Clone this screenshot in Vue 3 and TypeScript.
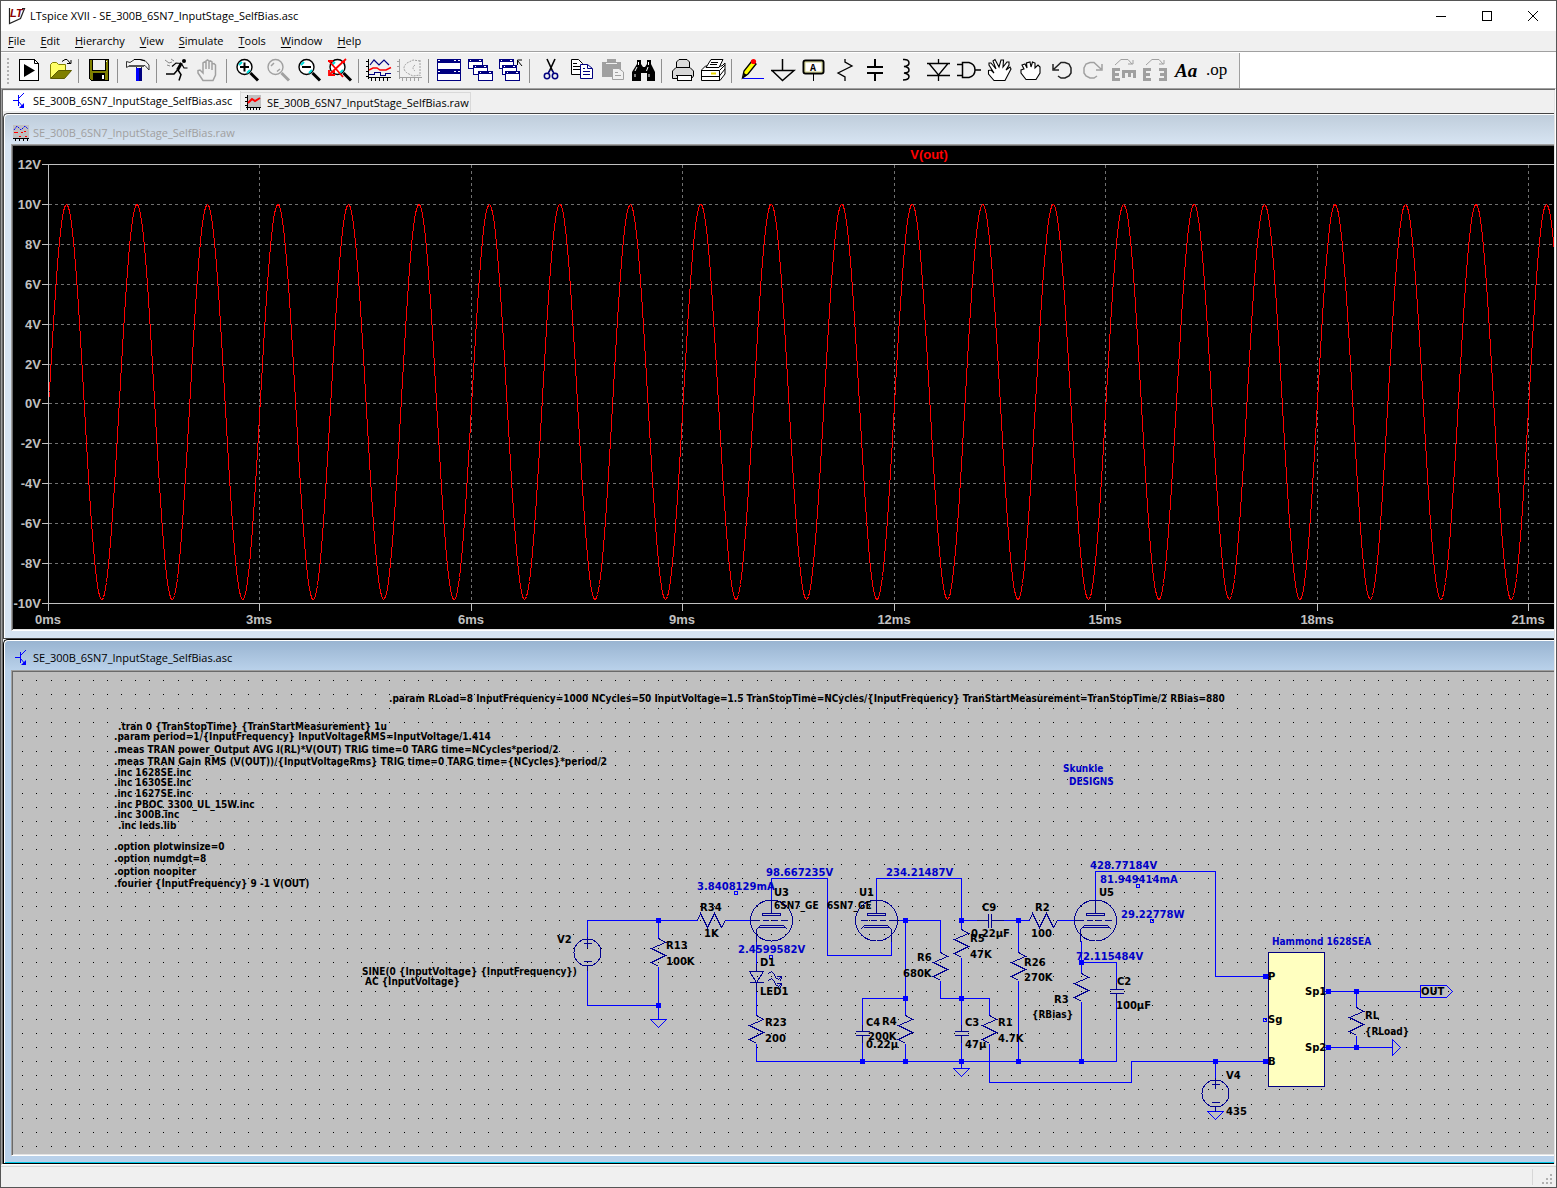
<script setup lang="ts">
type Kind = 'd' | 'b' | 'b d'
interface Label { t: string; x: number; y: number; c?: Kind }

const fileName = 'SE_300B_6SN7_InputStage_SelfBias'
const menus = ['File', 'Edit', 'Hierarchy', 'View', 'Simulate', 'Tools', 'Window', 'Help']

const groups: string[][] = [
  ['run', 'open'], ['save'], ['tool'], ['sprint', 'halt'],
  ['zoomin', 'zoompan', 'zoomout', 'zoomfit'], ['plot', 'smith'],
  ['tile', 'cascade', 'closeall'], ['cut', 'copy', 'paste', 'find'],
  ['print', 'setup'],
  ['wire', 'ground', 'label', 'resistor', 'capacitor', 'inductor', 'diode', 'gate',
    'move', 'drag', 'undo', 'redo', 'rotate', 'mirror', 'text', 'op'],
]

/* ---- waveform pane ---- */
const left = 48
const msPitch = 1480 / 7
const volts = [12, 10, 8, 6, 4, 2, 0, -2, -4, -6, -8, -10].map((v) => ({
  text: v + 'V', y: Math.round(403.4 - v * 19.95),
}))
const times = [0, 3, 6, 9, 12, 15, 18, 21].map((t, i) => ({
  text: t + 'ms', x: Math.round(left + i * msPitch),
}))
const wave = (() => {
  const period = msPitch / 3
  let d = 'M48 403'
  for (let x = 49; x < 2600; x++) {
    const y = 401.5 - 197.5 * Math.sin(((x - left - 0.4) / period) * 2 * Math.PI)
    d += 'L' + x + ' ' + Math.round(y)
  }
  return d
})()

/* ---- schematic pane ---- */
const dots = (() => {
  let d = ''
  for (let r = 0; r < 60; r++) {
    for (let c = 0; c < 180; c++) {
      d += 'M' + Math.floor(22.77 + 14.12 * c) + ' ' + Math.floor(680.45 + 14.12 * r) + 'h1v1h-1z'
    }
  }
  return d
})()

const wires = [
  'M587 936V920H697', 'M587 968V1005H658', 'M658 920V938', 'M658 966V1019',
  'M725 920H749', 'M771 899V878H827V955H891V940', 'M756 940V963', 'M756 991V1015',
  'M756 1043V1061H1116V992', 'M876 899V878H961V929', 'M898 920H940V952', 'M940 980V998H989V1015',
  'M905 920V1015', 'M905 998H862V1024', 'M862 1042V1061', 'M905 1043V1061',
  'M961 957V1024', 'M961 1042V1068', 'M989 1043V1082H1131V1061H1268', 'M961 920H976', 'M1003 920H1029',
  'M1018 920V952', 'M1018 980V1061', 'M1057 920H1074', 'M1095 899V871H1215V976H1272',
  'M1081 940V973', 'M1081 962H1116V982', 'M1081 1001V1061', 'M1215 1061V1077',
  'M1324 991H1420', 'M1324 1047H1392', 'M1356 991V1007', 'M1356 1035V1047',
  'M1420 985H1446L1452 991L1446 997H1420Z', 'M1392 1039L1400 1047L1392 1055Z',
  'M650 1019H666L658 1027Z', 'M953 1068H969L961 1076Z', 'M1207 1111H1223L1215 1119Z',
]
const nodes = [
  [658, 920], [658, 1005], [905, 920], [905, 998], [905, 1061], [862, 1061], [961, 920],
  [961, 998], [961, 1061], [1018, 920], [1018, 1061], [1081, 962], [1081, 1061], [1215, 1061],
  [1265, 976], [1265, 1061], [1328, 991], [1328, 1047], [1356, 991], [1356, 1047],
]
const probes = [[736, 892], [771, 956], [1138, 885], [1152, 920], [1265, 1019]]
const vertical = [[658, 938], [756, 1015], [940, 952], [905, 1015], [961, 929], [989, 1015], [1018, 952], [1081, 973], [1356, 1007]]
const horizontal = [[697, 920], [1029, 920]]
const sources = [[587, 952], [1215, 1093]]
const caps = [[862, 1033], [961, 1033], [1116, 991]]
const tubes = [
  { x: 771, flip: 1 }, { x: 876, flip: -1 }, { x: 1095, flip: 1 },
]
const zigV = 'l7 4l-14 6l14 7l-14 7l7 4'
const zigH = 'l3 -7l7 14l7 -14l7 14l4 -7'

const labels: Label[] = [
  { t: '.param RLoad=8 InputFrequency=1000 NCycles=50 InputVoltage=1.5 TranStopTime=NCycles/{InputFrequency} TranStartMeasurement=TranStopTime/2 RBias=880', x: 389, y: 702, c: 'd' },
  { t: '.tran 0 {TranStopTime} {TranStartMeasurement} 1u', x: 118, y: 730, c: 'd' },
  { t: '.param period=1/{InputFrequency} InputVoltageRMS=InputVoltage/1.414', x: 114, y: 740, c: 'd' },
  { t: '.meas TRAN power_Output AVG I(RL)*V(OUT) TRIG time=0 TARG time=NCycles*period/2', x: 114, y: 753, c: 'd' },
  { t: '.meas TRAN Gain RMS (V(OUT))/{InputVoltageRms} TRIG time=0 TARG time={NCycles}*period/2', x: 114, y: 765, c: 'd' },
  { t: '.inc 1628SE.inc', x: 114, y: 776, c: 'd' },
  { t: '.inc 1630SE.inc', x: 114, y: 786, c: 'd' },
  { t: '.inc 1627SE.inc', x: 114, y: 797, c: 'd' },
  { t: '.inc PBOC_3300_UL_15W.inc', x: 114, y: 808, c: 'd' },
  { t: '.inc 300B.inc', x: 114, y: 818, c: 'd' },
  { t: '.inc leds.lib', x: 118, y: 829, c: 'd' },
  { t: '.option plotwinsize=0', x: 114, y: 850, c: 'd' },
  { t: '.option numdgt=8', x: 114, y: 862, c: 'd' },
  { t: '.option noopiter', x: 114, y: 875, c: 'd' },
  { t: '.fourier {InputFrequency} 9 -1 V(OUT)', x: 114, y: 887, c: 'd' },
  { t: 'Skunkie', x: 1063, y: 772, c: 'b d' },
  { t: 'DESIGNS', x: 1069, y: 785, c: 'b d' },
  { t: 'V2', x: 557, y: 943 },
  { t: 'SINE(0 {InputVoltage} {InputFrequency})', x: 362, y: 975, c: 'd' },
  { t: 'AC {InputVoltage}', x: 365, y: 985, c: 'd' },
  { t: 'R13', x: 666, y: 949 }, { t: '100K', x: 666, y: 965 },
  { t: 'R34', x: 700, y: 911 }, { t: '1K', x: 704, y: 937 },
  { t: 'U3', x: 774, y: 896 }, { t: '6SN7_GE', x: 774, y: 909, c: 'd' },
  { t: '98.667235V', x: 766, y: 876, c: 'b' }, { t: '3.8408129mA', x: 697, y: 890, c: 'b' },
  { t: '2.4599582V', x: 738, y: 953, c: 'b' },
  { t: 'D1', x: 760, y: 966 }, { t: 'LED1', x: 760, y: 995 },
  { t: 'R23', x: 765, y: 1026 }, { t: '200', x: 765, y: 1042 },
  { t: 'U1', x: 859, y: 896 }, { t: '6SN7_GE', x: 827, y: 909, c: 'd' },
  { t: '234.21487V', x: 886, y: 876, c: 'b' },
  { t: 'C9', x: 982, y: 911 }, { t: '0.22µF', x: 971, y: 937 },
  { t: 'R5', x: 970, y: 942 }, { t: '47K', x: 970, y: 958 },
  { t: 'R6', x: 917, y: 961 }, { t: '680K', x: 903, y: 977 },
  { t: 'R26', x: 1024, y: 966 }, { t: '270K', x: 1024, y: 981 },
  { t: 'C4', x: 866, y: 1026 }, { t: '0.22µ', x: 866, y: 1048 },
  { t: 'R4', x: 882, y: 1025 }, { t: '200K', x: 868, y: 1040 },
  { t: 'C3', x: 965, y: 1026 }, { t: '47µ', x: 965, y: 1048 },
  { t: 'R1', x: 998, y: 1026 }, { t: '4.7K', x: 998, y: 1042 },
  { t: 'R2', x: 1035, y: 911 }, { t: '100', x: 1031, y: 937 },
  { t: 'U5', x: 1099, y: 896 },
  { t: '428.77184V', x: 1090, y: 869, c: 'b' }, { t: '81.949414mA', x: 1100, y: 883, c: 'b' },
  { t: '29.22778W', x: 1121, y: 918, c: 'b' }, { t: '72.115484V', x: 1076, y: 960, c: 'b' },
  { t: 'R3', x: 1054, y: 1003 }, { t: '{RBias}', x: 1032, y: 1018, c: 'd' },
  { t: 'C2', x: 1117, y: 985 }, { t: '100µF', x: 1116, y: 1009 },
  { t: 'V4', x: 1226, y: 1079 }, { t: '435', x: 1226, y: 1115 },
  { t: 'Hammond 1628SEA', x: 1272, y: 945, c: 'b d' },
  { t: 'P', x: 1268, y: 980 }, { t: 'Sg', x: 1268, y: 1023 }, { t: 'B', x: 1268, y: 1065 },
  { t: 'Sp1', x: 1305, y: 995 }, { t: 'Sp2', x: 1305, y: 1051 },
  { t: 'OUT', x: 1421, y: 995 },
  { t: 'RL', x: 1365, y: 1019 }, { t: '{RLoad}', x: 1365, y: 1035, c: 'd' },
]
</script>

<template>
  <div class="app">
    <header class="titlebar">
      <svg class="logo" width="18" height="18" viewBox="0 0 18 18">
        <path d="M1.500 1V16.500L12.500 11.500L16.500 1.500H14" fill="none" stroke="#222" stroke-width="1.200" />
        <text x="2" y="10" class="logo-text">LT</text>
      </svg>
      <h1>LTspice XVII - {{ fileName }}.asc</h1>
      <div class="controls">
        <button aria-label="Minimize"><svg width="12" height="12"><path d="M1 6.500H11" /></svg></button>
        <button aria-label="Maximize"><svg width="12" height="12"><path d="M1.500 1.500H10.500V10.500H1.500Z" /></svg></button>
        <button aria-label="Close"><svg width="12" height="12" class="smooth"><path d="M1 1L11 11M11 1L1 11" /></svg></button>
      </div>
    </header>

    <nav class="menubar">
      <button v-for="m in menus" :key="m"><u>{{ m[0] }}</u>{{ m.slice(1) }}</button>
    </nav>

    <div class="toolrow">
      <div class="toolbar">
        <div v-for="(g, gi) in groups" :key="gi" class="group">
          <button v-for="icon in g" :key="icon" :aria-label="icon">
            <svg width="26" height="26" viewBox="0 0 26 26">
              <template v-if="icon === 'run'">
                <path class="px" d="M3.500 1.500H18.500L22.500 5.500V22.500H3.500Z" fill="#fff" stroke="#000" />
                <path d="M18.500 1.500V5.500H22.500" fill="none" stroke="#000" />
                <path d="M8 6V19L19 12.500Z" fill="#000" />
              </template>
              <template v-else-if="icon === 'open'">
                <path d="M3.500 20V6.500L5.500 4.500H9.500L11.500 6.500H18.500V12" fill="#ffff66" stroke="#808000" />
                <path d="M3.500 20.500L11.500 12.500H24.500L17.500 20.500Z" fill="#808000" stroke="#5c5c00" />
                <path d="M15 3.500L18 1.500H20L23.500 5.500M20 5.500H24V2" fill="none" stroke="#000" />
              </template>
              <template v-else-if="icon === 'save'">
                <g class="px">
                  <path d="M3 1H23V23H5L3 21Z" fill="#000" />
                  <path d="M4 2H6V13H20V2H22V22H5L4 21Z" fill="#808000" />
                  <path d="M7 2H19V12H7Z" fill="#f0f0f0" /><path d="M7 15H19V22H7Z" fill="#000" />
                  <path d="M16 17H18V21H16Z" fill="#fff" /><path d="M20 3H21V4H20Z" fill="#f0f0f0" />
                </g>
              </template>
              <template v-else-if="icon === 'tool'">
                <path d="M1.500 3.500V9.500L5 7.500H11.500V10.500H16.500V7.500H20L24 12V7L20 2.500L15 1.500H9.500L5 4.500Z" fill="#f4f4f4" stroke="#333" />
                <path d="M9 1.500H15L20 3" fill="none" stroke="#000" />
                <path d="M4 8H19" stroke="#555" stroke-width="2" />
                <path d="M11 10H17V23H11Z" fill="#0000ff" /><path d="M15.500 10V23" stroke="#000080" stroke-width="3" />
              </template>
              <template v-else-if="icon === 'sprint'">
                <circle cx="20" cy="3" r="2" />
                <path d="M14 12L17 16.500L15 22.500M13.500 12L10 16H2" fill="none" stroke="#000" stroke-width="1.500" />
                <path d="M17 5.500L12 5L8 8.500M18 6.500L20 10H23.500" fill="none" stroke="#000" stroke-width="1.200" />
                <path d="M17.500 5L13.500 12" stroke="#000" stroke-width="3" />
                <path d="M1 2L5 5L8 4M3 7L6 8M7 1L10 3" fill="none" stroke="#888" />
              </template>
              <template v-else-if="icon === 'halt'">
                <path d="M8 22.500L3 15V12.500L5 12L8 15V5L9.500 4L11 5V11V3L12.500 2L14 3V11V4L15.500 3L17 4V12V6L19 5.500L20.500 7V17L18 22.500Z" fill="#f0f0f0" stroke="#a0a0a0" stroke-width="1.500" />
              </template>
              <template v-else-if="icon.startsWith('zoom')">
                <path d="M16.500 15L24 22.500" :stroke="icon === 'zoompan' ? '#a0a0a0' : '#000'" stroke-width="3" />
                <circle cx="10.500" cy="9" r="7.500" :fill="icon === 'zoompan' ? '#f0f0f0' : '#fff'" :stroke="icon === 'zoompan' ? '#a0a0a0' : '#000'" stroke-width="1.400" />
                <path v-if="icon !== 'zoompan'" d="M5 7L8 4M13 15L16 12" stroke="#00dede" stroke-width="2" />
                <path v-if="icon === 'zoompan'" d="M6 8L9 5M12 13.500L15 11" stroke="#a0a0a0" stroke-width="1.500" />
                <path v-if="icon === 'zoomin'" d="M6 9H15M10.500 4.500V13.500" stroke="#000" stroke-width="2" />
                <path v-if="icon === 'zoomout'" d="M6 9H15" stroke="#000" stroke-width="2" />
                <path v-if="icon === 'zoomfit'" d="M2 3L16 19M19 1L3 16" stroke="#f00" stroke-width="1.800" />
                <path v-if="icon === 'zoomfit'" d="M1 3H6M2 12V17H8M4 14H8M14 4H18" fill="none" stroke="#f00" stroke-width="1.800" />
              </template>
              <template v-else-if="icon === 'plot'">
                <path class="px" d="M2.500 1V21M2 19.500H25M0 3.500H2M0 8.500H2M0 13.500H2M0 18.500H2M5.500 20V23M9.500 20V23M13.500 20V23M17.500 20V23M21.500 20V23" stroke="#000" />
                <path d="M4 7L8 2L13 7L18 2L23 7" fill="none" stroke="#000080" stroke-width="1.200" />
                <path d="M3 12L7 10H11L14 12H20L25 9.500" fill="none" stroke="#f00" stroke-width="1.400" />
                <path class="px" d="M3 16.500H8.500V14.500H14.500V17.500H19.500V15.500H25" fill="none" stroke="#000080" />
              </template>
              <template v-else-if="icon === 'smith'">
                <path class="px" d="M2.500 1V21M2 19.500H25M0 3.500H2M0 8.500H2M0 13.500H2M5.500 20V23M9.500 20V23M13.500 20V23M17.500 20V23M21.500 20V23" stroke="#a0a0a0" />
                <path d="M23 3L16 2L10 5Q4 10 10 15L16 18L23 17M18 7Q14 10 18 13M23 2V18" fill="none" stroke="#a0a0a0" stroke-dasharray="2 1" />
              </template>
              <template v-else-if="icon === 'tile'">
                <g class="px"><path v-for="y in [1, 12]" :key="y" :d="`M1.500 ${y + 0.5}h23v10h-23z`" fill="#fff" stroke="#000080" />
                  <path v-for="y in [1, 12]" :key="-y" :d="`M1 ${y}h24v4h-24z`" fill="#000080" />
                  <path d="M2 2H4V3H2ZM18 2H20V3H18ZM22 2H24V3H22ZM2 13H4V14H2ZM18 13H20V14H18ZM22 13H24V14H22Z" fill="#fff" /></g>
              </template>
              <template v-else-if="icon === 'cascade' || icon === 'closeall'">
                <g class="px">
                  <g v-for="i in [0, 1, 2]" :key="i" :transform="icon === 'cascade' ? `translate(${i * 5} ${i * 6})` : `translate(${i * 3} ${i * 6})`">
                    <path d="M1.500 1.500H15.500V10.500H1.500Z" fill="#fff" stroke="#000080" />
                    <path d="M1 1H16V4H1Z" fill="#000080" /><path d="M3 2H4V3H3ZM12 2H14V3H12Z" fill="#fff" />
                  </g>
                </g>
                <path v-if="icon === 'closeall'" d="M24 8L19.500 2.500M19.500 7V2H24" fill="none" stroke="#000" />
              </template>
              <template v-else-if="icon === 'cut'">
                <path d="M10 1L16 14M18 1L12 14" stroke="#000" stroke-width="1.600" />
                <circle cx="10" cy="18" r="2.700" fill="none" stroke="#000080" stroke-width="1.500" />
                <circle cx="18" cy="18" r="2.700" fill="none" stroke="#000080" stroke-width="1.500" />
                <path d="M13 12L11 15.500M15 12L17 15.500" stroke="#000080" stroke-width="1.500" />
              </template>
              <template v-else-if="icon === 'copy'">
                <path d="M3.500 1.500H10.500L14.500 5.500V16.500H3.500Z" fill="#fff" stroke="#000" /><path d="M5 5.500H9M5 8.500H12M5 11.500H12" stroke="#000" />
                <path d="M12.500 6.500H19.500L24.500 10.500V20.500H12.500Z" fill="#fff" stroke="#000080" /><path d="M19.500 6.500V10.500H24M15 10.500H17M15 13.500H22M15 16.500H22" fill="none" stroke="#000080" />
              </template>
              <template v-else-if="icon === 'paste'">
                <path d="M3 4H8V1H17V4H22V19H3Z" fill="#a0a0a0" /><path d="M7 5.500H18" stroke="#f0f0f0" />
                <path d="M13.500 10.500H20L24.500 14V21.500H13.500Z" fill="#f0f0f0" stroke="#a0a0a0" /><path d="M16 14.500H19M16 17.500H22" stroke="#a0a0a0" />
              </template>
              <template v-else-if="icon === 'find'">
                <path d="M7 2H11V6L13 9H15L17 6V2H21V6L25 14V23H17V15H11V23H2V14L7 6Z" />
                <path d="M8.500 4V7M18.500 4V7M5 13L7 9M16.500 13L18 9M5 16V19M19 16V19" stroke="#fff" />
              </template>
              <template v-else-if="icon === 'print'">
                <path d="M7.500 10V4L10 1.500H18L20.500 4V10" fill="#ddd" stroke="#000" />
                <path d="M3.500 20.500V13L7 9.500H21L24.500 13V18L22.500 20.500Z" fill="#d8d8d8" stroke="#000" /><path class="px" d="M7 17.500H22V22.500H8V18" fill="#fff" stroke="#000" />
              </template>
              <template v-else-if="icon === 'setup'">
                <path d="M2 11.500L5.500 8H22L25 5V16L20 22.500H1.500V12Z" fill="#fff" stroke="#000" />
                <path d="M6 9.500L11 1.500H23L19 9.500Z" fill="#fff" stroke="#000" /><path d="M11 4.500H18M10 6.500H17M1.500 12.500H19.500V22M19.500 12.500L25 7M2 18.500H19L25 11" fill="none" stroke="#000" />
                <path d="M11 15.500H16" stroke="#e8d800" stroke-width="2" />
              </template>
              <template v-else-if="icon === 'wire'">
                <path d="M3.500 20L5 13L13 3L17 6L9 16Z" fill="#ff0" stroke="#000" stroke-width="1.300" /><path d="M4 20L5 15L8 17Z" fill="#000" />
                <circle cx="14.500" cy="3.500" r="2.600" fill="#f00" /><path class="px" d="M4 20.500H25" stroke="#00f" />
              </template>
              <path v-else-if="icon === 'ground'" d="M12.500 1V12M1 12.500H24L12.500 22.500L2 12.500" fill="none" stroke="#000" stroke-width="1.500" />
              <template v-else-if="icon === 'label'">
                <rect x="2.500" y="2.500" width="20" height="13" rx="2" fill="#fff" stroke="#000" stroke-width="2" /><rect x="4" y="4" width="17" height="10" fill="none" stroke="#999900" stroke-opacity="0.500" />
                <path d="M12.500 16V23" stroke="#000" /><text x="9" y="13" class="tag">A</text>
              </template>
              <path v-else-if="icon === 'resistor'" d="M13 1V4L20 8L6 15L13 19V23" fill="none" stroke="#000" stroke-width="1.300" />
              <path v-else-if="icon === 'capacitor'" class="px" d="M4 9H20M4 15H20M12 1V8M12 16V23" fill="none" stroke="#000" stroke-width="2" />
              <path v-else-if="icon === 'inductor'" d="M9 1.500Q15 1 15 5Q15 8 10 8.500Q15 9 15 12Q15 15 10 15Q15 16 15 18.500Q15 22 9 22" fill="none" stroke="#000" stroke-width="1.500" />
              <path v-else-if="icon === 'diode'" d="M13.500 1V5.500M2 5.500H25M4 5.500L13.500 17L23 5.500M2 17.500H25M13.500 17V23" fill="none" stroke="#000" stroke-width="1.300" />
              <path v-else-if="icon === 'gate'" d="M1 6.500H6.500M1 17.500H6.500M6.500 4.500V19.500H13Q19 18 19 12Q19 6 13 4.500ZM19 12H25" fill="none" stroke="#000" stroke-width="1.500" />
              <path v-else-if="icon === 'move'" d="M7 22.500L1.500 16V12.500L4 12L7 15L2 7V5L4 5L9 11L6 3L8 1.500L12 9L14 2L16.500 2L16 9L20 4L22 4V7L19 12L23 9L24 11L18 22.500Z" fill="#fff" stroke="#000" stroke-width="1.100" />
              <path v-else-if="icon === 'drag'" d="M8 21.500L3 15V12L6 11L4 7L7 6L9 10L8.500 5L12 4L13 9L14.500 4L17 5L17 10L20 7L22 9V15L18 21.500Z" fill="#fff" stroke="#000" stroke-width="1.100" />
              <path v-else-if="icon === 'undo'" d="M9 18L12 20H16L20 18L22 15V10L20 6L16 4.500H12L5 11M4 6V12H10" fill="none" stroke="#222" stroke-width="1.500" />
              <path v-else-if="icon === 'redo'" d="M17 18L14 20H10L6 18L4 15V10L6 6L10 4.500H14L21 11M22 6V12H16" fill="none" stroke="#a0a0a0" stroke-width="1.500" />
              <template v-else-if="icon === 'rotate' || icon === 'mirror'">
                <path d="M4 7L10 1.500H17L21 6M17 6H22V2" fill="none" stroke="#a0a0a0" />
                <path class="px" d="M1 10H9V13H4V15H8V18H4V20H9V23H1Z" fill="#a0a0a0" />
                <path v-if="icon === 'rotate'" class="px" d="M11 12H25V20H22V15H20V19H17V15H14V20H11Z" fill="#a0a0a0" />
                <path v-else class="px" d="M25 10H17V13H22V15H18V18H22V20H17V23H25Z" fill="#a0a0a0" />
              </template>
              <text v-else-if="icon === 'text'" x="2" y="19" class="aa">Aa</text>
              <text v-else x="2" y="17" class="op">.op</text>
            </svg>
          </button>
        </div>
      </div>
    </div>

    <main class="client">
      <div class="tabs">
        <button class="tab current">
          <svg width="16" height="16" viewBox="0 0 16 16" class="npn"><path d="M0 7.500H5M5.500 2V13M6 5L11 0M6 9L10 14" /><path d="M11 10V15H6Z" class="tip" /></svg>
          <span>{{ fileName }}.asc</span>
        </button>
        <button class="tab">
          <svg width="16" height="16" viewBox="0 0 16 16">
            <path d="M3 0H16V12H3Z" fill="#c0c0c0" /><path class="px" d="M2.500 0V15M1 12.500H16M0 2.500H2M0 6.500H2M0 10.500H2M5.500 13V15M8.500 13V15M11.500 13V15M14.500 13V15" stroke="#000" />
            <path d="M3 8L7 4L10 6L15 3" fill="none" stroke="#f00" stroke-width="2" />
          </svg>
          <span>{{ fileName }}.raw</span>
        </button>
      </div>

      <section class="child">
        <header class="caption">
          <svg width="16" height="16" viewBox="0 0 16 16">
            <path d="M0 0H16V13H0Z" fill="#c0c0c0" />
            <path d="M1 5L4 1L8 5L12 1L15 4" fill="none" stroke="#00f" stroke-dasharray="2 1" /><path d="M1 7.500H5M8 7.500H10M11 6.500H13M6 11.500H8M12 11.500H14" stroke="#f00" />
            <path class="px" d="M0 13.500H16M2.500 14V16M6.500 14V16M10.500 14V16M14.500 14V16" stroke="#000" />
          </svg>
          <h2>{{ fileName }}.raw</h2>
        </header>
        <div class="view">
          <svg class="canvas plot">
            <g transform="translate(-12.500 -145.500)">
              <g class="grid">
                <path v-for="v in volts" :key="v.text" :d="`M48 ${v.y}h2600`" />
                <path v-for="t in times" :key="t.text" :d="`M${t.x} 164V603`" />
              </g>
              <path :d="wave" class="wave" />
              <g class="axis">
                <path d="M2600 164H41M2600 603H41M48 164V610" />
                <path v-for="v in volts" :key="v.text" :d="`M41 ${v.y}h7`" />
                <path v-for="t in times" :key="t.text" :d="`M${t.x} 603v7`" />
              </g>
            </g>
            <g transform="translate(-13 -146)">
              <text v-for="v in volts" :key="v.text" x="41" :y="v.y + 5" class="volt">{{ v.text }}</text>
              <text v-for="t in times" :key="t.text" :x="t.x" y="624" class="time">{{ t.text }}</text>
              <text x="929" y="159" class="trace">V(out)</text>
            </g>
          </svg>
        </div>
      </section>

      <section class="child active">
        <header class="caption">
          <svg width="16" height="16" viewBox="0 0 16 16" class="npn"><path d="M0 7.500H5M5.500 2V13M6 5L11 0M6 9L10 14" /><path d="M11 10V15H6Z" class="tip" /></svg>
          <h2>{{ fileName }}.asc</h2>
        </header>
        <div class="view">
          <svg class="canvas sheet">
            <g transform="translate(-13 -672)">
              <path :d="dots" class="px" />
            </g>
            <g transform="translate(-12.500 -671.500)">
              <path d="M1268 952H1324V1086H1268Z" fill="#ffffc0" stroke="#000080" class="px" />
              <path v-for="w in wires" :key="w" :d="w" class="wire" />
              <g class="symbol">
                <path v-for="p in vertical" :key="'v' + p" :d="`M${p[0]} ${p[1]}${zigV}`" />
                <path v-for="p in horizontal" :key="'h' + p" :d="`M${p[0]} ${p[1]}${zigH}`" />
                <g v-for="p in sources" :key="'s' + p" :transform="`translate(${p[0]} ${p[1]})`">
                  <circle r="13.500" />
                  <path d="M0 -16V-5M-4 -9H4M-4 9H4M0 13V18" />
                </g>
                <path v-for="p in caps" :key="'c' + p" :d="`M${p[0] - 7} ${p[1] - 2}h14m0 4h-14m7 0v7m0 -11v-7`" />
                <path d="M976 920H988M988 913V927M991 913V927M991 920H1003" />
                <g v-for="u in tubes" :key="u.x" :transform="`translate(${u.x} 920) scale(${u.flip} 1)`">
                  <ellipse rx="21" ry="20.500" />
                  <path d="M0 -21V-7M-9 -7H9V-5H-9ZM-21 0H-12M-9 0H-3M0 0H6M9 0H16M-15 21V9L-11 5H12L16 9M-13 7H13" />
                </g>
                <path d="M756 963V971M749 971H763L756 982ZM749 982H763M756 982V991" />
                <path v-for="dy in [0, 7]" :key="dy" :d="`M768 ${973 + dy}l3 -2l3 3l1 3l3 2l3 -3m-5 0h5l-1 5`" />
              </g>
              <rect v-for="n in nodes" :key="'n' + n" :x="n[0] - 2.5" :y="n[1] - 2.5" width="5" height="5" class="node" />
              <rect v-for="n in probes" :key="'p' + n" :x="n[0] - 2" :y="n[1] - 1" width="3" height="3" class="wire" />
            </g>
            <g transform="translate(-13 -672)">
              <text v-for="l in labels" :key="l.x + '-' + l.y" :x="l.x" :y="l.y" :class="['label', l.c]">{{ l.t }}</text>
            </g>
          </svg>
        </div>
      </section>
    </main>

    <footer class="status">
      <span class="pane"></span>
      <svg width="12" height="12"><path class="px" d="M8 0h2v2h-2zM4 4h2v2h-2zM8 4h2v2h-2zM0 8h2v2h-2zM4 8h2v2h-2zM8 8h2v2h-2z" fill="#b0b0b0" /></svg>
    </footer>
  </div>
</template>

<style>
body { margin: 0; }
</style>

<style scoped>
* { box-sizing: border-box; }
.app {
  display: flex; flex-direction: column; height: 100vh; min-height: 600px; overflow: hidden;
  border: 1px solid #555; background: #f0f0f0; color: #000;
  font: 11px/16px "Open Sans", "Noto Sans", sans-serif;
}
button { border: 0; margin: 0; padding: 0; background: none; font: inherit; color: inherit; }
h1, h2 { margin: 0; font: inherit; }
svg { display: block; flex: none; }
.px { shape-rendering: crispEdges; }

.titlebar { display: flex; align-items: center; height: 30px; padding-left: 7px; background: #fff; }
.logo-text { font: italic bold 11px "Liberation Sans", sans-serif; fill: #8b0000; }
.titlebar h1 { flex: 1; padding-left: 4px; white-space: nowrap; }
.controls { display: flex; }
.controls button { display: flex; align-items: center; justify-content: center; width: 46px; height: 30px; }
.controls svg { fill: none; stroke: #000; stroke-width: 1; shape-rendering: crispEdges; }
.controls svg.smooth { shape-rendering: auto; }

.menubar { display: flex; gap: 15px; height: 20px; padding: 1px 7px; }
.menubar u { text-underline-offset: 2px; }

.toolrow { height: 37px; border-top: 1px solid #a0a0a0; padding-top: 1px; background: #fff; }
.toolbar {
  position: relative; display: flex; align-items: center; width: max-content; height: 35px;
  padding: 0 7px 0 12px; background: #f0f0f0; border-right: 1px solid #a0a0a0;
}
.toolbar::before {
  content: ""; position: absolute; left: 6px; top: 5px; bottom: 3px; width: 2px;
  background: repeating-linear-gradient(#b0b0b0 0 2px, transparent 2px 4px);
}
.group { display: flex; }
.group + .group { padding-left: 8px; background: linear-gradient(#909090, #909090) 3px 1px / 1px 24px no-repeat; }
.group button { width: 31px; height: 26px; padding-left: 3px; }
.tag { font: bold 10px "Liberation Mono", monospace; }
.aa { font: italic bold 19px "Liberation Serif", serif; }
.op { font: 17px "Liberation Serif", serif; }

.client {
  flex: 1; min-height: 0; display: flex; flex-direction: column;
  border: 1px solid; border-color: #a0a0a0 #fff #fff #a0a0a0;
  box-shadow: inset 1px 1px #696969, inset -1px 0 #e3e3e3; padding: 1px 1px 0 1px;
}
.tabs { display: flex; align-items: flex-start; height: 23px; padding-top: 1px; }
.tab { display: flex; align-items: center; height: 20px; gap: 6px; padding: 0 8px 0 8px; border-right: 1px solid #d9d9d9; white-space: nowrap; }
.tab.current { width: 238px; background: #fff; }
.tab + .tab { width: 230px; margin-top: 1px; padding-left: 4px; border-top: 1px solid #d9d9d9; }
.npn { fill: none; stroke: #00f; stroke-width: 1; margin-left: 2px; margin-right: -2px; }
.npn .tip { fill: #00f; stroke: none; }

.child {
  flex: 1; min-height: 0; display: flex; flex-direction: column;
  border: solid #444; border-width: 1px 0 1px 1px; border-top-left-radius: 5px;
  background: #d7e4f2; box-shadow: inset 1px 1px #fff; padding: 1px 0 7px 8px;
}
.caption {
  display: flex; align-items: center; gap: 4px; height: 29px; flex: none; margin-left: -7px; padding: 6px 0 0 8px;
  background: linear-gradient(#bfcddb, #d7e4f2); color: #a0a0a0; border-top-left-radius: 4px;
}
.child.active { background: #b9d1ea; border-color: #000; box-shadow: inset 1px 1px #fff, inset 0 -1px #00c8e8; }
.active .caption { background: linear-gradient(#99b4d1, #b9d1ea); color: #000; }
.view {
  flex: 1; min-height: 0; margin-left: -1px; border: solid; border-width: 1px 0 1px 1px; border-color: #a0a0a0 #fff #fff #a0a0a0;
  box-shadow: inset 1px 1px #696969, inset 0 -1px #e3e3e3; padding: 1px 0 1px 1px;
}
.canvas { width: 100%; height: 100%; overflow: hidden; }
.plot { background: #000; font: bold 13px "Liberation Sans", Arial, sans-serif; fill: #c0c0c0; }
.volt { text-anchor: end; }
.time, .trace { text-anchor: middle; }
.trace { fill: #f00; }
.grid { stroke: #707070; stroke-dasharray: 3 3; shape-rendering: crispEdges; }
.axis { stroke: #c0c0c0; shape-rendering: crispEdges; }
.wave { fill: none; stroke: #f00; shape-rendering: crispEdges; }

.sheet { background: #c0c0c0; }
.wire { fill: none; stroke: #00f; shape-rendering: crispEdges; }
.node { fill: #00f; shape-rendering: crispEdges; }
.symbol { fill: none; stroke: #000090; shape-rendering: crispEdges; }
.label { font: bold 10px "DejaVu Sans", Verdana, sans-serif; fill: #000; white-space: pre; }
.label.b { fill: #0000c8; }
.label.d { font-family: "DejaVu Sans Condensed", "DejaVu Sans", sans-serif; }

.status { display: flex; align-items: center; height: 21px; margin-top: 1px; border-top: 1px solid #d7d7d7; padding-right: 2px; }
.status .pane { flex: 1; height: 16px; margin-right: 9px; border-right: 1px solid #d7d7d7; }
.status svg { margin-top: 6px; }
</style>
